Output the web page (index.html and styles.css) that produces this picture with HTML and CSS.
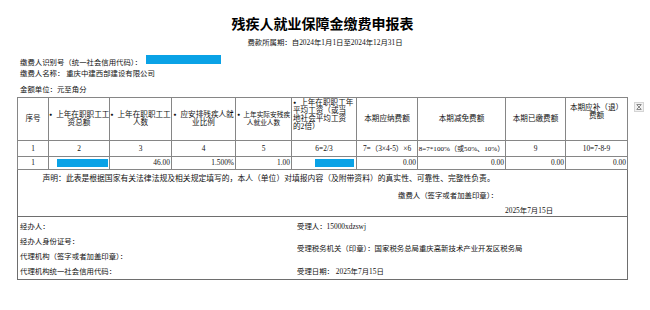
FILE: index.html
```html
<!DOCTYPE html>
<html lang="zh-CN">
<head>
<meta charset="utf-8">
<title>残疾人就业保障金缴费申报表</title>
<link rel="stylesheet" href="styles.css">
</head>
<body>
<div class="page">
  <h1 class="title">残疾人就业保障金缴费申报表</h1>
  <div class="period">费款所属期：自2024年1月1日至2024年12月31日</div>
  <div class="info">
    <div class="info-row r1">缴费人识别号（统一社会信用代码）：<span class="mask mask-id"></span></div>
    <div class="info-row r2">缴费人名称： 重庆中建西部建设有限公司</div>
    <div class="info-row r3">金额单位：元至角分</div>
  </div>
  <div class="form-wrap">
    <div class="form">
      <table class="grid">
        <colgroup>
          <col class="c1"><col class="c2"><col class="c3"><col class="c4"><col class="c5">
          <col class="c6"><col class="c7"><col class="c8"><col class="c9"><col class="c10">
        </colgroup>
        <tr class="head">
          <th>序号</th>
          <th><span class="dot">●</span>上年在职职工工<br>资总额</th>
          <th><span class="dot">●</span>上年在职职工工<br>人数</th>
          <th><span class="dot">●</span>应安排残疾人就<br>业比例</th>
          <th class="tight"><span class="dot">●</span>上年实际安残疾<br>人就业人数</th>
          <th class="left top"><span class="dot">●</span>上年在职职工年<br>平均工资（或当<br>地社会平均工资<br>的2倍）</th>
          <th>本期应纳费额</th>
          <th>本期减免费额</th>
          <th>本期已缴费额</th>
          <th class="top2">本期应补（退）<br>费额</th>
        </tr>
        <tr class="nums">
          <td>1</td><td>2</td><td>3</td><td>4</td><td>5</td>
          <td>6=2/3</td><td class="snug">7=（3×4-5）×6</td><td class="snug small">8=7*100%（或50%、10%）</td><td>9</td><td>10=7-8-9</td>
        </tr>
        <tr class="data">
          <td class="center">1</td>
          <td><span class="mask mask-wage"></span></td>
          <td>46.00</td>
          <td>1.500%</td>
          <td>1.00</td>
          <td><span class="mask mask-avg"></span></td>
          <td>0.00</td>
          <td>0.00</td>
          <td>0.00</td>
          <td>0.00</td>
        </tr>
      </table>
      <div class="decl">
        <p class="decl-text">声明：此表是根据国家有关法律法规及相关规定填写的，本人（单位）对填报内容（及附带资料）的真实性、可靠性、完整性负责。</p>
        <p class="decl-sign">缴费人（签字或者加盖印章）：</p>
        <p class="decl-date">2025年7月15日</p>
      </div>
      <div class="sign">
        <div class="sign-left">
          <div class="sign-row">经办人：</div>
          <div class="sign-row">经办人身份证号：</div>
          <div class="sign-row">代理机构（签字或者加盖印章）：</div>
          <div class="sign-row">代理机构统一社会信用代码：</div>
        </div>
        <div class="sign-right">
          <div class="sign-row">受理人：15000xdzswj</div>
          <div class="sign-row">受理税务机关（印章）：国家税务总局重庆高新技术产业开发区税务局</div>
          <div class="sign-row">受理日期： 2025年7月15日</div>
        </div>
      </div>
    </div>
    <svg class="fold-icon" width="10" height="10" viewBox="0 0 10 10" aria-hidden="true">
      <rect x="0.5" y="0.5" width="9" height="9" fill="#f1f1f1" stroke="#d4d4d4"/>
      <path d="M2.5 2.5h5M2.5 7.5h5M3 3l4 4M7 3l-4 4" stroke="#8a8a8a" stroke-width="1" fill="none"/>
    </svg>
  </div>
</div>
</body>
</html>
```

FILE: styles.css
```css
html, body {
  margin: 0;
  padding: 0;
  background: #ffffff;
}

body {
  font-family: "Liberation Serif", "Noto Sans CJK SC", serif;
  color: #111111;
  font-size: 7.4px;
}

.page {
  width: 650px;
  height: 310px;
  overflow: hidden;
}

.title {
  margin: 15px 0 0 0;
  padding-right: 5px;
  font-family: "Noto Sans CJK SC", sans-serif;
  font-size: 14px;
  line-height: 16px;
  font-weight: 700;
  text-align: center;
  color: #000;
}

.period {
  margin-top: 7px;
  line-height: 10px;
  text-align: center;
}

.info {
  padding: 6.5px 0 0 20px;
}

.info-row {
  line-height: 12px;
  height: 12px;
  white-space: nowrap;
}

.r2 { margin-top: 1.5px; }
.r3 { margin-top: 3.5px; }

.mask {
  display: inline-block;
  background: #0aa2e6;
}

.mask-id {
  width: 75px;
  height: 9.5px;
  margin-left: 4px;
}

.form-wrap {
  display: flex;
  align-items: flex-start;
  gap: 6px;
  margin-top: 1.5px;
  padding-left: 17px;
}

.form {
  width: 611px;
}

.fold-icon {
  display: block;
  margin-top: 5px;
}

.grid {
  width: 611px;
  table-layout: fixed;
  border-collapse: collapse;
  border: 1px solid #6e6e6e;
}

.c1 { width: 31px; }
.c2 { width: 61px; }
.c3 { width: 62px; }
.c4 { width: 64px; }
.c5 { width: 56px; }
.c6 { width: 65px; }
.c7 { width: 61px; }
.c8 { width: 88px; }
.c9 { width: 60px; }
.c10 { width: 62px; }

.grid th,
.grid td {
  border: 1px solid #868686;
  padding: 0 1px;
  font-weight: 400;
  font-size: 7.4px;
  line-height: 8px;
  overflow: hidden;
  white-space: nowrap;
}

.grid th {
  padding: 0;
  font-size: 7.6px;
  text-align: center;
  vertical-align: middle;
}

.dot {
  display: inline-block;
  width: 7.2px;
  font-size: 5px;
  text-align: left;
  vertical-align: 1px;
}

.grid th.tight {
  font-size: 6.7px;
}

.grid th.tight .dot {
  width: 6.4px;
}

.grid th.left {
  text-align: left;
  padding-left: 1px;
}

.grid th.top {
  vertical-align: top;
  padding-top: 1px;
}

.grid th.top2 {
  vertical-align: top;
  padding-top: 6px;
}

.head { height: 43px; }

.nums { height: 16px; }

.nums td {
  text-align: center;
  vertical-align: middle;
}

.nums td.snug {
  padding: 0;
}

.nums td.small {
  font-size: 7.1px;
}

.data { height: 13px; }

.data td {
  text-align: right;
  vertical-align: middle;
}

.data td.center {
  text-align: center;
}

.mask-wage {
  width: 51px;
  height: 8px;
  vertical-align: middle;
}

.mask-avg {
  width: 39px;
  height: 8px;
  margin-right: 1px;
  vertical-align: middle;
}

.decl {
  border: 1px solid #6e6e6e;
  border-top: 0;
  padding-top: 3px;
  height: 43px;
}

.decl p {
  margin: 0;
  line-height: 12px;
  white-space: nowrap;
}

.decl-text {
  padding-left: 24.5px;
  font-size: 7.8px;
}

.decl .decl-sign {
  margin-top: 5px;
  padding-left: 380px;
}

.decl .decl-date {
  margin-top: 3px;
  padding-left: 487px;
}

.sign {
  display: grid;
  grid-template-columns: 279px 1fr;
  border: 1px solid #6e6e6e;
  border-top: 0;
  padding-top: 1.5px;
  height: 60.5px;
}

.sign-left {
  padding-left: 2px;
}

.sign-right {
  display: flex;
  flex-direction: column;
  justify-content: space-between;
}

.sign-row {
  line-height: 15px;
  white-space: nowrap;
}
```
